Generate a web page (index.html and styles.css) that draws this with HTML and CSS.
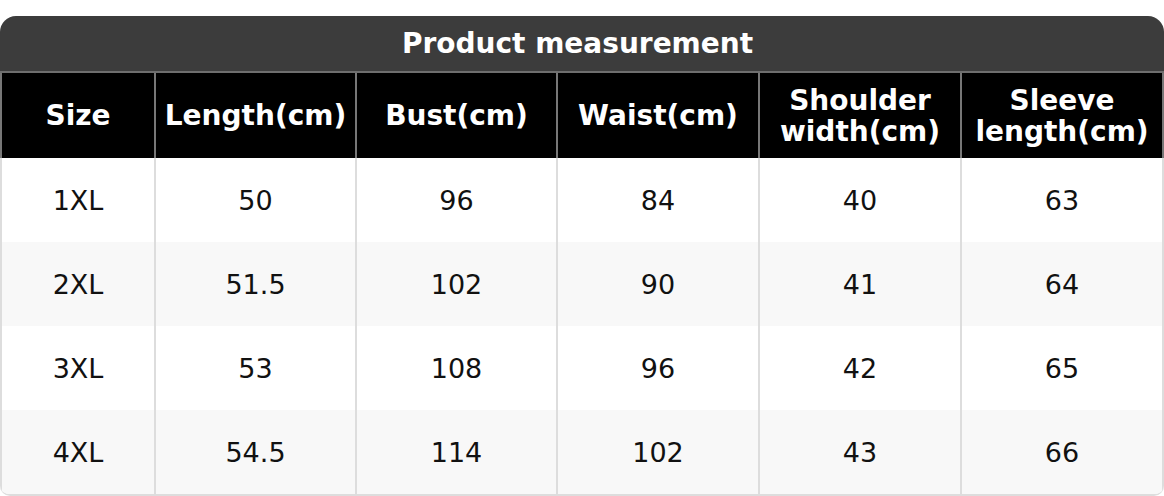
FILE: index.html
```html
<!DOCTYPE html>
<html>
<head>
<meta charset="utf-8">
<link rel="stylesheet" href="styles.css">
</head>
<body>
<div class="sheet">
  <div class="title">Product measurement</div>
  <div class="grid">
    <div class="hd">Size</div>
    <div class="hd">Length(cm)</div>
    <div class="hd">Bust(cm)</div>
    <div class="hd">Waist(cm)</div>
    <div class="hd">Shoulder<br>width(cm)</div>
    <div class="hd">Sleeve<br>length(cm)</div>

    <div class="td">1XL</div><div class="td">50</div><div class="td">96</div><div class="td">84</div><div class="td">40</div><div class="td">63</div>
    <div class="td alt">2XL</div><div class="td alt">51.5</div><div class="td alt">102</div><div class="td alt">90</div><div class="td alt">41</div><div class="td alt">64</div>
    <div class="td">3XL</div><div class="td">53</div><div class="td">108</div><div class="td">96</div><div class="td">42</div><div class="td">65</div>
    <div class="td alt">4XL</div><div class="td alt">54.5</div><div class="td alt">114</div><div class="td alt">102</div><div class="td alt">43</div><div class="td alt">66</div>
  </div>
</div>
</body>
</html>
```
FILE: styles.css
```css
html, body {
  margin: 0;
  padding: 0;
  background: #ffffff;
}
body {
  font-family: "DejaVu Sans", sans-serif;
}
.sheet {
  margin-top: 16px;
  width: 1164px;
  box-sizing: border-box;
  border-bottom: 2px solid #dddddd;
  border-radius: 16px 16px 10px 10px;
  overflow: hidden;
}
.title {
  background: #3c3c3c;
  color: #ffffff;
  font-weight: bold;
  font-size: 28px;
  height: 55px;
  padding-right: 9px;
  display: flex;
  align-items: center;
  justify-content: center;
  border-bottom: 2px solid #6e6e6e;
}
.grid {
  display: grid;
  grid-template-columns: 154px 201px 201px 202px 202px 1fr;
}
.hd {
  box-sizing: border-box;
  background: #000000;
  color: #ffffff;
  font-weight: bold;
  font-size: 28px;
  line-height: 31px;
  height: 85px;
  display: flex;
  align-items: center;
  justify-content: center;
  text-align: center;
  border-left: 2px solid #777777;
}
.td {
  box-sizing: border-box;
  background: #ffffff;
  color: #111111;
  font-size: 27px;
  height: 84px;
  display: flex;
  align-items: center;
  justify-content: center;
  border-left: 2px solid #dddddd;
}
.td.alt {
  background: #f8f8f8;
}
.hd:nth-child(6n) {
  border-right: 2px solid #777777;
}
.td:nth-child(6n) {
  border-right: 2px solid #dddddd;
}
```
